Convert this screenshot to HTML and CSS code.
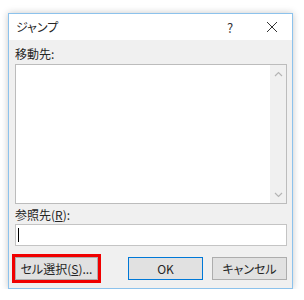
FILE: index.html
```html
<!DOCTYPE html>
<html lang="ja">
<head>
    <meta charset="UTF-8">
    <title>ジャンプ</title>
    <link rel="stylesheet" href="styles.css">
</head>
<body>
    <div class="dialog">
        <div class="titlebar">
            <span class="title">ジャンプ</span>
            <span class="help">?</span>
            <svg class="close" width="12" height="12" viewBox="0 0 12 12">
                <path d="M1 1 L11 11 M11 1 L1 11" stroke="#333" stroke-width="1" fill="none"/>
            </svg>
        </div>
        <div class="content">
            <div class="label">移動先:</div>
            <div class="listbox">
                <div class="list-area"></div>
                <div class="scrollbar">
                    <svg width="9" height="6" viewBox="0 0 9 6"><path d="M1 5 L4.5 1.5 L8 5" stroke="#b5b5b5" stroke-width="1.2" fill="none"/></svg>
                    <svg width="9" height="6" viewBox="0 0 9 6"><path d="M1 1 L4.5 4.5 L8 1" stroke="#b5b5b5" stroke-width="1.2" fill="none"/></svg>
                </div>
            </div>
            <div class="label label-ref">参照先(<u>R</u>):</div>
            <div class="textbox"><span class="caret"></span></div>
            <div class="buttons">
                <button class="btn btn-select">セル選択(<u>S</u>)...</button>
                <button class="btn btn-ok">OK</button>
                <button class="btn">キャンセル</button>
            </div>
        </div>
    </div>
</body>
</html>
```

FILE: styles.css
```css
body {
    margin: 0;
    background-color: #fff;
    font-family: "Noto Sans CJK JP", "Noto Sans", sans-serif;
    font-size: 12px;
    color: #262626;
    font-feature-settings: "palt";
}

.dialog {
    margin: 13px 0 0 8px;
    width: 285px;
    border: 1px solid #8cc2ec;
    box-sizing: border-box;
    background-color: #f0f0f0;
    box-shadow: 0 0 7px rgba(0, 0, 0, 0.22);
}

.titlebar {
    height: 26px;
    background-color: #fff;
    display: flex;
    align-items: center;
    padding-left: 7px;
}

.title {
    flex: 1;
    line-height: 16px;
}

.help {
    width: 12px;
    margin-right: 27px;
    font-size: 13px;
    color: #333;
}

.close {
    margin-right: 14px;
}

.content {
    padding: 6px 5px 8px 6px;
    display: flex;
    flex-direction: column;
}

.label {
    line-height: 16px;
    height: 16px;
}

.label-ref {
    margin-top: 3px;
}

.listbox {
    margin-top: 2px;
    height: 140px;
    border: 1px solid #bcbcbc;
    box-sizing: border-box;
    background-color: #fff;
    display: flex;
}

.list-area {
    flex: 1;
}

.scrollbar {
    width: 16px;
    background-color: #f0f0f0;
    display: flex;
    flex-direction: column;
    justify-content: space-between;
    align-items: center;
    padding: 6px 0 5px;
}

.textbox {
    margin-top: 1px;
    height: 22px;
    border: 1px solid #c4c4c4;
    box-sizing: border-box;
    background-color: #fff;
    display: flex;
    align-items: center;
    padding-left: 2px;
}

.caret {
    width: 1px;
    height: 14px;
    background-color: #000;
}

.buttons {
    margin-top: 11px;
    display: flex;
    gap: 9px;
}

.btn {
    height: 23px;
    width: 75px;
    padding: 0;
    border: 1px solid #adadad;
    background-color: #e1e1e1;
    font-family: inherit;
    font-size: 12px;
    font-feature-settings: "palt";
    color: #262626;
}

.btn-select {
    width: 83px;
    outline: 3px solid #f00000;
}

.btn-ok {
    margin-left: auto;
    border-color: #0078d7;
}
```
